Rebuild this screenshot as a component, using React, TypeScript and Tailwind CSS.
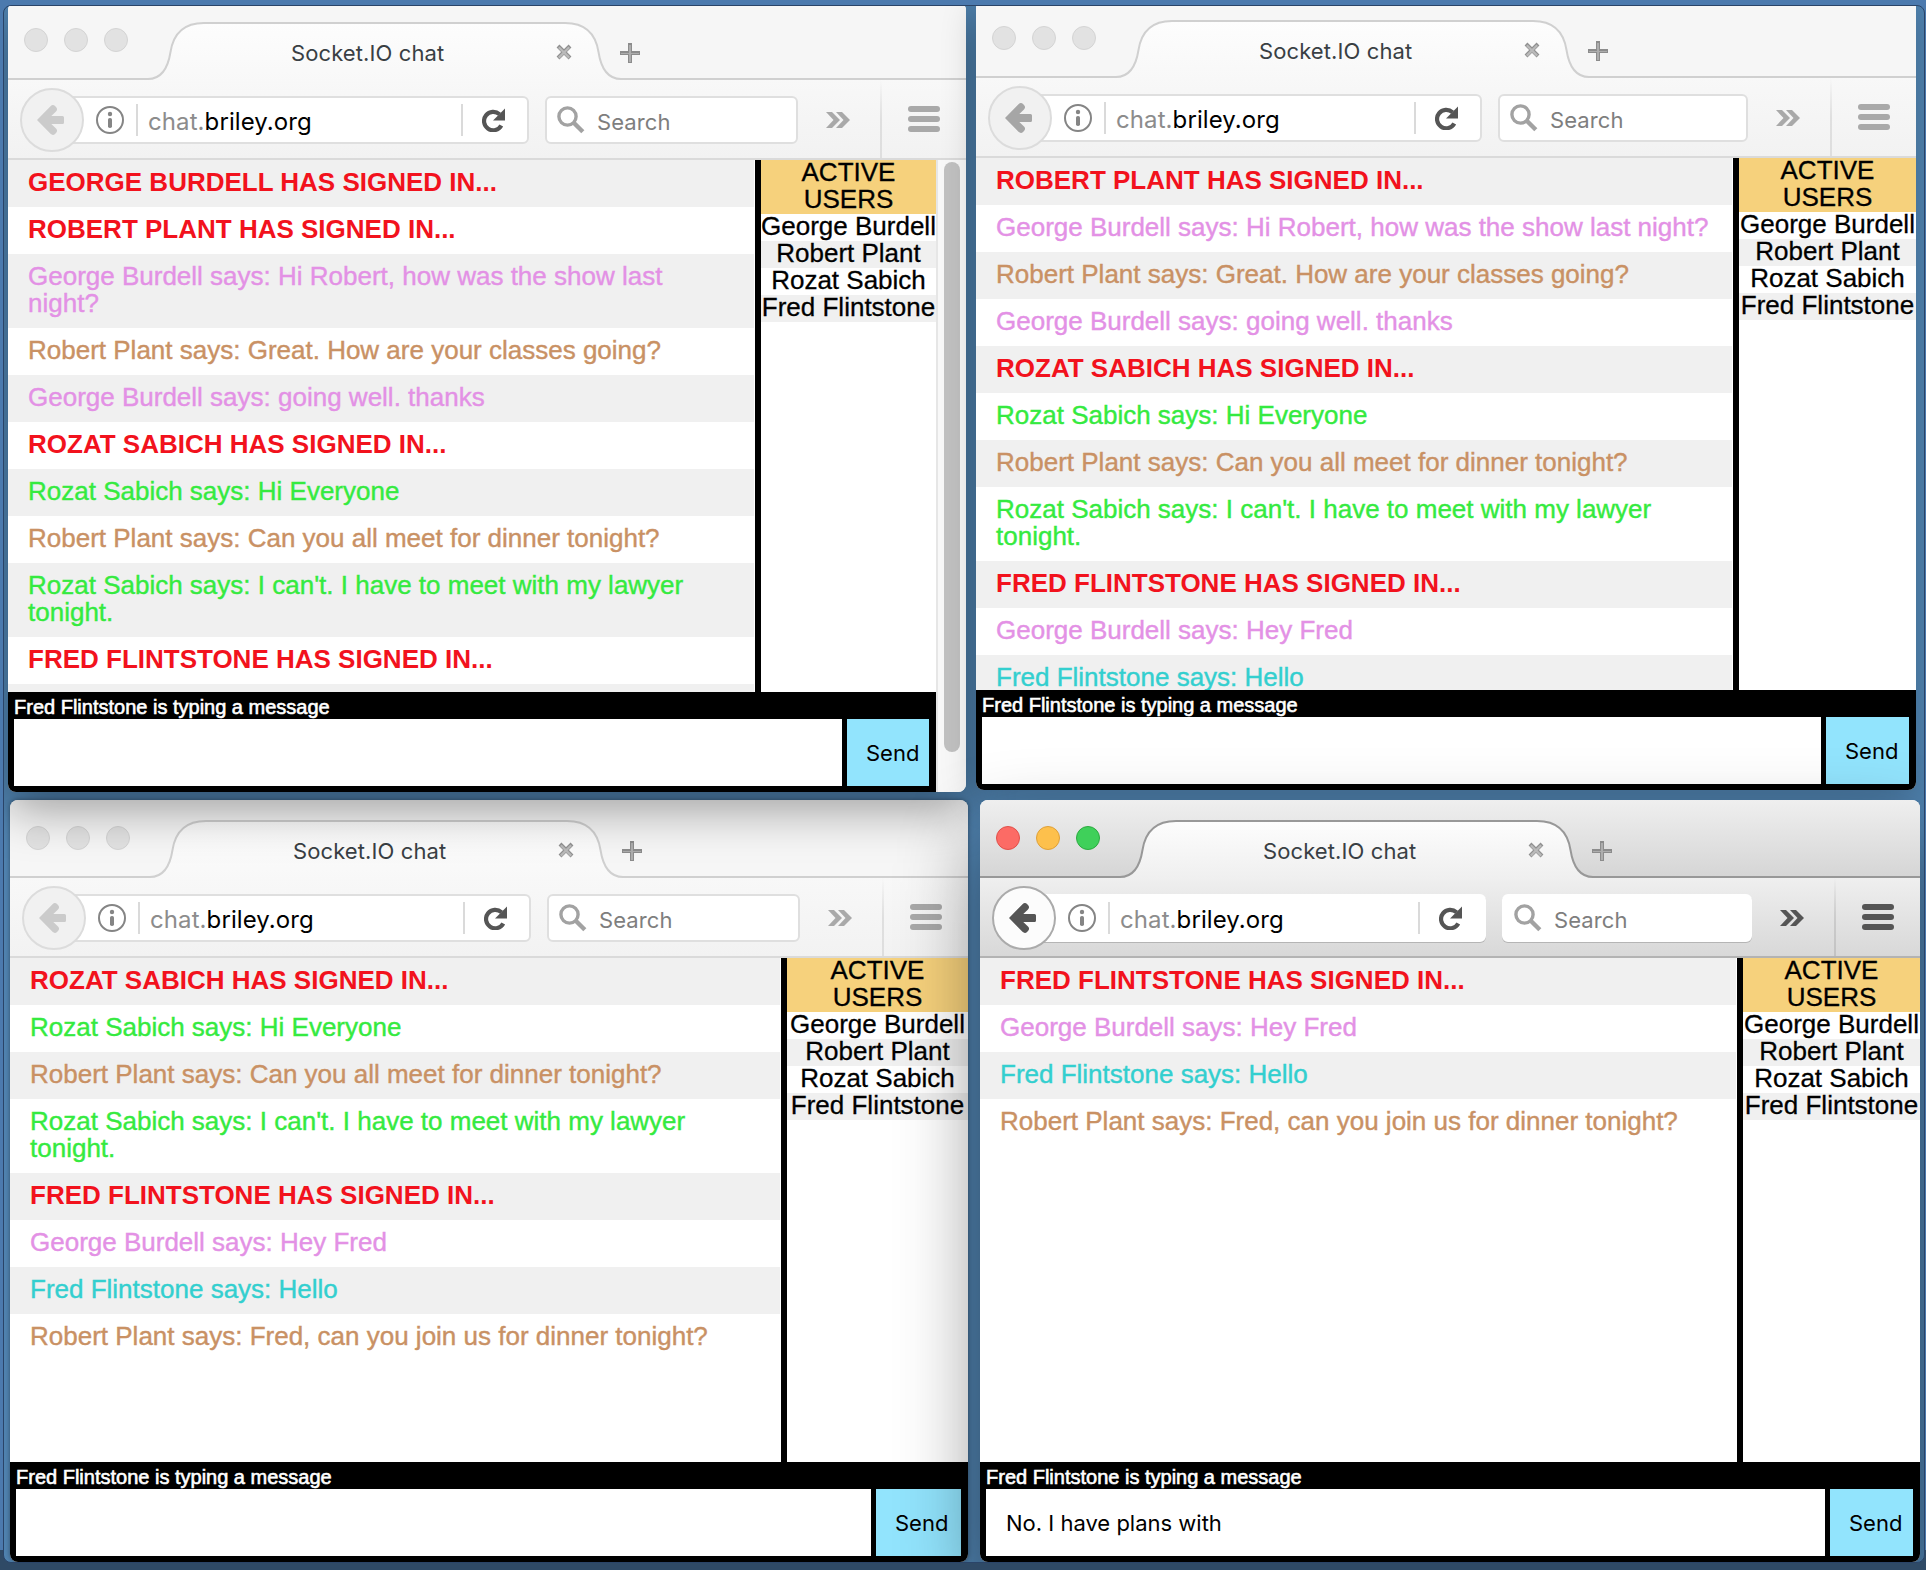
import type { ReactNode } from "react";

type Tone = "notice" | "george" | "robert" | "rozat" | "fred";
type Message = { tone: Tone; lines: string[] };

const toneClass: Record<Tone, string> = {
  notice: "text-[#f2121d] font-bold",
  george: "text-[#e391e5] [-webkit-text-stroke:0.4px]",
  robert: "text-[#c99164] [-webkit-text-stroke:0.4px]",
  rozat: "text-[#35ea40] [-webkit-text-stroke:0.4px]",
  fred: "text-[#33cfcf] [-webkit-text-stroke:0.4px]",
};

const georgeIn: Message = { tone: "notice", lines: ["GEORGE BURDELL HAS SIGNED IN..."] };
const robertIn: Message = { tone: "notice", lines: ["ROBERT PLANT HAS SIGNED IN..."] };
const rozatIn: Message = { tone: "notice", lines: ["ROZAT SABICH HAS SIGNED IN..."] };
const fredIn: Message = { tone: "notice", lines: ["FRED FLINTSTONE HAS SIGNED IN..."] };
const great: Message = { tone: "robert", lines: ["Robert Plant says: Great. How are your classes going?"] };
const goingWell: Message = { tone: "george", lines: ["George Burdell says: going well. thanks"] };
const hiAll: Message = { tone: "rozat", lines: ["Rozat Sabich says: Hi Everyone"] };
const dinner: Message = { tone: "robert", lines: ["Robert Plant says: Can you all meet for dinner tonight?"] };
const lawyer: Message = {
  tone: "rozat",
  lines: ["Rozat Sabich says: I can't. I have to meet with my lawyer", "tonight."],
};
const heyFred: Message = { tone: "george", lines: ["George Burdell says: Hey Fred"] };
const hello: Message = { tone: "fred", lines: ["Fred Flintstone says: Hello"] };
const joinUs: Message = { tone: "robert", lines: ["Robert Plant says: Fred, can you join us for dinner tonight?"] };
const emptyRow: Message = { tone: "george", lines: [] };

const users = ["George Burdell", "Robert Plant", "Rozat Sabich", "Fred Flintstone"];

function TabShape({ active, id }: { active: boolean; id: string }) {
  const d =
    "M-2 77 H140 C154 77 160 66 162.500 50 C165 34 174 21 196 21 H557 C579 21 588 34 590.500 50 C593 66 599 77 613 77 H970";
  return (
    <svg className="absolute inset-0 h-[80px] w-full" fill="none">
      <defs>
        <linearGradient id={id} x1="0" y1="21" x2="0" y2="80" gradientUnits="userSpaceOnUse">
          <stop offset="0" stopColor="#fdfdfd" />
          <stop offset="1" stopColor={active ? "#efefef" : "#f8f8f8"} />
        </linearGradient>
      </defs>
      <path d={d + " V80 H-2 Z"} fill={`url(#${id})`} />
      <path d={d} stroke={active ? "#989898" : "#d0d0d0"} strokeWidth="2" />
    </svg>
  );
}

function Chrome({ active, id, darkBack, narrow }: { active: boolean; id: string; darkBack?: boolean; narrow?: boolean }) {
  const icon = active ? "#555555" : "#a9a9a9";
  const arrow = active ? "#555555" : darkBack ? "#a6a6a6" : "#cbcbcb";
  const field = active ? "border-white shadow-[0_1px_0_#b5b5b5]" : "border-[#dfdfdf]";
  const dot = "bg-[#e2e2e2] border-[#d4d4d4]";
  return (
    <div className="relative h-[158px] shrink-0 font-['Inter',sans-serif] text-[22px] leading-[28px]">
      <div className={`h-[78px] ${active ? "bg-linear-to-b from-[#efefef] to-[#d5d5d5]" : "bg-[#f6f6f6]"}`} />
      <div
        className={`h-[80px] border-b-2 ${
          active
            ? "border-[#b3b3b3] bg-linear-to-b from-[#efefef] to-[#d8d8d8]"
            : "border-[#dadada] bg-linear-to-b from-[#f8f8f8] to-[#f2f2f2]"
        }`}
      />
      <TabShape active={active} id={id} />
      <div className="absolute inset-0 flex flex-col">
        <div className="flex h-[78px] items-start">
          <div className="ml-4 mt-[26px] flex gap-4">
            <span className={`size-6 rounded-full border ${active ? "border-[#e0504a] bg-[#fc6b65]" : dot}`} />
            <span className={`size-6 rounded-full border ${active ? "border-[#dfa038] bg-[#fdc04c]" : dot}`} />
            <span className={`size-6 rounded-full border ${active ? "border-[#2caa40] bg-[#3fd05a]" : dot}`} />
          </div>
          <span className="ml-[163px] mt-[37px] w-[265px] whitespace-nowrap tracking-[0.1px] text-[#393f44]">Socket.IO chat</span>
          <svg className="mt-[42px] size-4" viewBox="0 0 16 16" fill="none">
            <path d="M2 2 L14 14 M14 2 L2 14" stroke="#909090" strokeWidth="4" />
            <path d="M2.800 3.200 L13.200 13.600 M13.200 3.200 L2.800 13.600" stroke="#bababa" strokeWidth="2.200" />
          </svg>
          <svg className="ml-[48px] mt-[41px] size-5" viewBox="0 0 20 20" fill="none">
            <path d="M8 0h4v8h8v4h-8v8H8v-8H0V8h8z" fill="#8c8c8c" />
            <path d="M9 2h2v8h8v1h-8v8H9v-8H1v-1h8z" fill="#adadad" />
          </svg>
        </div>
        <div className="flex h-[80px] items-start">
          <div className={`relative ml-[44px] mt-4 flex h-12 items-center rounded-md border-2 bg-white ${field} ${narrow ? "w-[462px]" : "w-[477px]"}`}>
            <span
              className={`absolute -left-[34px] -top-[10px] flex size-16 items-center justify-center rounded-full border-2 ${
                active ? "border-[#ababab] bg-[#fcfcfc]" : "border-[#dcdcdc] bg-[#f1f1f1]"
              }`}
            >
              <svg className="size-[32px]" viewBox="0 0 32 32" fill={arrow}>
                <path d="M1 16 L14.500 2.200 Q17 0 19.300 2.300 L20.200 3.200 Q22 5.300 20 7.400 L15.300 12 H26.500 Q28 12 28 13.500 V18.500 Q28 20 26.500 20 H15.300 L20 24.600 Q22 26.700 20.200 28.800 L19.300 29.700 Q17 32 14.500 29.800 Z" />
              </svg>
            </span>
            <svg className="ml-[42px] mt-0 size-7 shrink-0" viewBox="0 0 28 28" fill="none">
              <circle cx="14" cy="14" r="13" stroke="#858585" strokeWidth="2" />
              <circle cx="14" cy="8" r="2.200" fill="#858585" />
              <rect x="12" y="12" width="4" height="10" rx="1.800" fill="#858585" />
            </svg>
            <span className="ml-3 h-8 w-[2px] bg-[#dadada]" />
            <span className="ml-[10px] mt-[4px] grow whitespace-nowrap text-[24px] tracking-[0.09px] text-black">
              <span className="text-[#8c8c8c]">chat.</span>briley.org
            </span>
            <span className="h-8 w-[2px] bg-[#dadada]" />
            <svg className="ml-[19px] mr-[21px] size-6 shrink-0" viewBox="0 0 24 24" fill="none">
              <path d="M17.500 6.300 A9.200 9.200 0 1 0 19.300 17.500" stroke="#555" strokeWidth="4.200" />
              <path d="M23 0.500 V12.500 H11 Z" fill="#555" />
            </svg>
          </div>
          <div className={`ml-4 mt-4 flex h-12 items-center rounded-md border-2 bg-white ${field} ${narrow ? "w-[250px]" : "w-[253px]"}`}>
            <svg className="ml-[10px] size-7 shrink-0" viewBox="0 0 28 28" fill="none">
              <circle cx="10.500" cy="10.500" r="8.600" stroke="#a2a2a2" strokeWidth="3.400" />
              <path d="M16.500 16.500 L25.800 25.800" stroke="#a2a2a2" strokeWidth="4.400" />
            </svg>
            <span className="ml-[12px] mt-[3px] tracking-[0.1px] text-[#7e7e7e]">Search</span>
          </div>
          <svg className="ml-7 mt-8 h-4 w-6 shrink-0" viewBox="0 0 24 16" fill={icon}>
            <path d="M0 0 H6 L14 8 L6 16 H0 L7.500 8 Z" />
            <path d="M10 0 H16 L24 8 L16 16 H10 L17.500 8 Z" />
          </svg>
          <span className={`ml-[30px] h-[78px] w-[2px] bg-linear-to-b from-transparent ${active ? "via-[#cccccc] to-[#c2c2c2]" : "via-[#dfdfdf] to-[#dedede]"}`} />
          <span className="ml-[26px] mt-[26px] flex w-8 flex-col gap-1">
            {[0, 1, 2].map((i) => (
              <span key={i} className={`h-[6px] rounded-full ${active ? "bg-[#555555]" : "bg-[#a9a9a9]"}`} />
            ))}
          </span>
        </div>
      </div>
    </div>
  );
}

type WindowProps = {
  id: string;
  frame: string;
  messages: Message[];
  listWidth: string;
  inputWidth: string;
  active?: boolean;
  narrow?: boolean;
  darkBack?: boolean;
  scrollbar?: boolean;
  draft?: string;
  children?: ReactNode;
};

function ChatWindow(p: WindowProps) {
  return (
    <section className={`absolute flex flex-col overflow-hidden bg-white font-['Liberation_Sans',Arial,sans-serif] ${p.frame}`}>
      <Chrome active={!!p.active} id={p.id} narrow={p.narrow} darkBack={p.darkBack} />
      <div className="flex min-h-0 grow">
        <div className="flex min-w-0 grow flex-col">
          <div className="flex min-h-0 grow overflow-hidden text-[26px] leading-[27px]">
            <ul className={`shrink-0 overflow-hidden ${p.listWidth}`}>
              {p.messages.map((m, i) => (
                <li key={i} className={`whitespace-nowrap pb-[11px] pl-5 pt-[9px] odd:bg-[#f0f0f0] ${toneClass[m.tone]}`}>
                  {m.lines.map((l) => (
                    <div key={l}>{l}</div>
                  ))}
                </li>
              ))}
            </ul>
            <aside className="ml-px grow border-l-[6px] border-black text-center text-black [-webkit-text-stroke:0.3px]">
              <div className="bg-[#f6d17c]">
                <div className="relative -top-px">
                  ACTIVE
                  <br />
                  USERS
                </div>
              </div>
              {users.map((u) => (
                <div key={u} className="flex justify-center whitespace-nowrap odd:bg-[#f0f0f0]">
                  <span className="relative -top-px">{u}</span>
                </div>
              ))}
            </aside>
          </div>
          <footer className="h-[100px] shrink-0 bg-black pl-[6px] pr-[7px]">
            <div className="h-[27px] whitespace-nowrap pt-[2px] text-[20px] leading-[27px] text-white [-webkit-text-stroke:0.6px]">
              Fred Flintstone is typing a message
            </div>
            <div className="flex h-[67px] gap-[5px] font-['Inter',sans-serif] text-[22px] leading-[69px] text-black">
              <div className={`shrink-0 whitespace-nowrap bg-white pl-5 ${p.inputWidth}`}>{p.draft}</div>
              <div className="h-[67px] grow bg-[#92e4fd] pl-[19px]">Send</div>
            </div>
          </footer>
        </div>
        {p.scrollbar && (
          <div className="w-[30px] border-l-2 border-[#e6e6e6] bg-[#f8f8f8] pl-[6px] pt-[2px]">
            <div className="h-[590px] w-4 rounded-full bg-[#c1c1c1]" />
          </div>
        )}
      </div>
      {p.children}
    </section>
  );
}

export default function App() {
  return (
    <main className="relative h-[1570px] w-[1926px] overflow-hidden bg-[#4c7aae]">
      <div className="absolute inset-x-0 bottom-0 h-[20px] bg-[#2f4a66]" />
      <div className="absolute bottom-[7px] left-[3px] right-px top-[5px] overflow-hidden rounded-lg border border-[#2a4468] bg-[#5083b0]">
        <ChatWindow
          id="tabRozat"
          frame="left-[6px] top-[794px] h-[762px] w-[958px] rounded-[8px] shadow-[0_0_5px_rgba(0,0,0,0.4)]"
          messages={[rozatIn, hiAll, dinner, lawyer, fredIn, heyFred, hello, joinUs]}
          listWidth="w-[770px]"
          inputWidth="w-[855px]"
        />
        <ChatWindow
          id="tabGeorge"
          frame="left-[4px] -top-[4px] h-[790px] w-[958px] rounded-[8px] shadow-[0_18px_48px_rgba(0,0,0,0.36)]"
          messages={[
            georgeIn,
            robertIn,
            { tone: "george", lines: ["George Burdell says: Hi Robert, how was the show last", "night?"] },
            great,
            goingWell,
            rozatIn,
            hiAll,
            dinner,
            lawyer,
            fredIn,
            emptyRow,
          ]}
          listWidth="w-[746px]"
          inputWidth="w-[828px]"
          scrollbar
        />
        <ChatWindow
          id="tabRobert"
          frame="left-[972px] -top-[6px] h-[790px] w-[940px] rounded-[8px] shadow-[0_8px_36px_rgba(0,0,0,0.2)]"
          messages={[
            robertIn,
            { tone: "george", lines: ["George Burdell says: Hi Robert, how was the show last night?"] },
            great,
            goingWell,
            rozatIn,
            hiAll,
            dinner,
            lawyer,
            fredIn,
            heyFred,
            hello,
          ]}
          listWidth="w-[756px]"
          inputWidth="w-[839px]"
          narrow
          darkBack
        />
        <ChatWindow
          id="tabFred"
          frame="left-[976px] top-[794px] h-[762px] w-[940px] rounded-[8px] shadow-[0_36px_80px_rgba(0,0,0,0.45)]"
          messages={[fredIn, heyFred, hello, joinUs]}
          listWidth="w-[756px]"
          inputWidth="w-[839px]"
          draft="No. I have plans with"
          active
          narrow
        />
      </div>
    </main>
  );
}
